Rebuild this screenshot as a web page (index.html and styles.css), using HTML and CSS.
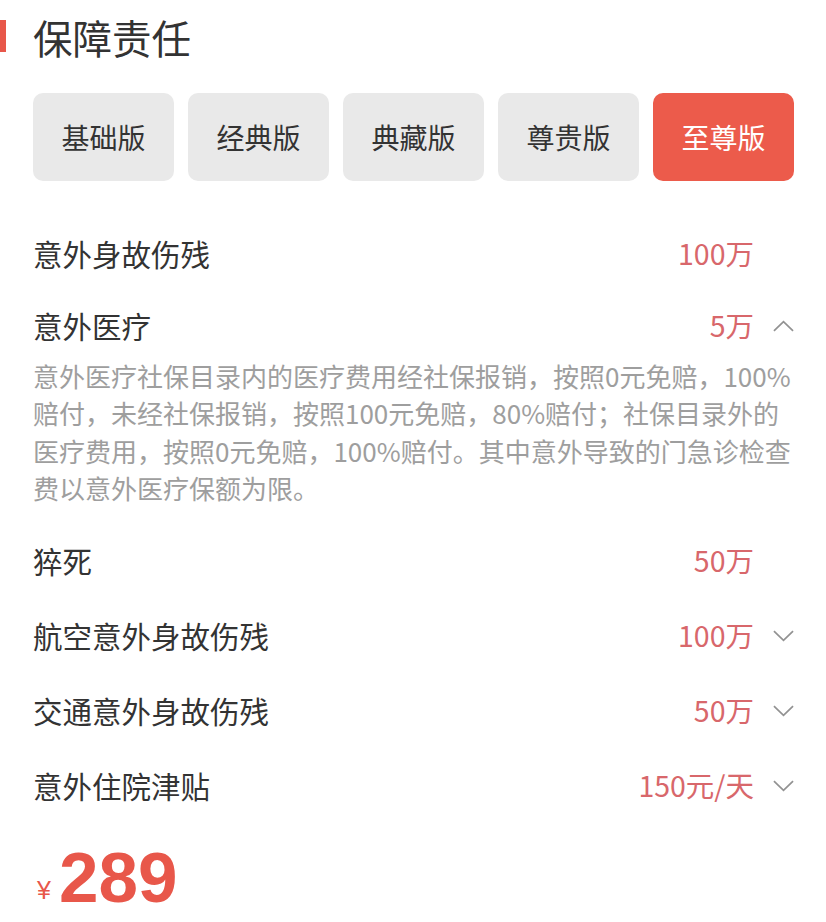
FILE: index.html
```html
<!DOCTYPE html>
<html lang="zh-CN">
<head>
    <meta charset="UTF-8">
    <meta name="viewport" content="width=device-width, initial-scale=1.0">
    <title>保障责任</title>
    <link rel="stylesheet" href="styles.css">
</head>
<body>
    <div class="section-title">保障责任</div>

    <div class="plans">
        <div class="plan">基础版</div>
        <div class="plan">经典版</div>
        <div class="plan">典藏版</div>
        <div class="plan">尊贵版</div>
        <div class="plan active">至尊版</div>
    </div>

    <div class="items">
        <div class="item">
            <div class="item-head">
                <span class="label">意外身故伤残</span>
                <span class="value">100万</span>
                <span class="arrow"></span>
            </div>
        </div>
        <div class="item open">
            <div class="item-head">
                <span class="label">意外医疗</span>
                <span class="value">5万</span>
                <span class="arrow"><svg viewBox="0 0 22 12"><polyline points="1,11 11,1.5 21,11"/></svg></span>
            </div>
            <div class="desc">意外医疗社保目录内的医疗费用经社保报销，按照0元免赔，100%赔付，未经社保报销，按照100元免赔，80%赔付；社保目录外的医疗费用，按照0元免赔，100%赔付。其中意外导致的门急诊检查费以意外医疗保额为限。</div>
        </div>
        <div class="item">
            <div class="item-head">
                <span class="label">猝死</span>
                <span class="value">50万</span>
                <span class="arrow"></span>
            </div>
        </div>
        <div class="item">
            <div class="item-head">
                <span class="label">航空意外身故伤残</span>
                <span class="value">100万</span>
                <span class="arrow"><svg viewBox="0 0 22 12"><polyline points="1,1 11,10.5 21,1"/></svg></span>
            </div>
        </div>
        <div class="item">
            <div class="item-head">
                <span class="label">交通意外身故伤残</span>
                <span class="value">50万</span>
                <span class="arrow"><svg viewBox="0 0 22 12"><polyline points="1,1 11,10.5 21,1"/></svg></span>
            </div>
        </div>
        <div class="item">
            <div class="item-head">
                <span class="label">意外住院津贴</span>
                <span class="value">150元/天</span>
                <span class="arrow"><svg viewBox="0 0 22 12"><polyline points="1,1 11,10.5 21,1"/></svg></span>
            </div>
        </div>
    </div>

    <div class="price"><span class="currency">¥</span><span class="amount">289</span></div>
</body>
</html>
```

FILE: styles.css
```css
body {
    margin: 0;
    padding: 0 32px 0 33px;
    background-color: #fff;
    font-family: "Noto Sans CJK SC", "Noto Sans", sans-serif;
    color: #333;
}
.section-title {
    position: relative;
    font-size: 39.5px;
    line-height: 74px;
    height: 74px;
}
.section-title::before {
    content: "";
    position: absolute;
    left: -33px;
    top: 20px;
    width: 6px;
    height: 32px;
    background-color: #e8574a;
}
.plans {
    display: grid;
    grid-template-columns: repeat(5, 1fr);
    gap: 14px;
    margin-top: 19px;
}
.plan {
    height: 88px;
    border-radius: 10px;
    background-color: #e9e9e9;
    display: flex;
    align-items: center;
    justify-content: center;
    font-size: 28px;
    color: #333;
}
.plan.active {
    background-color: #ec5b4b;
    color: #fff;
}
.items {
    margin-top: 34px;
}
.item-head {
    display: flex;
    align-items: center;
    height: 75px;
}
.item.open .item-head {
    height: 69px;
}
.label {
    flex: 1;
    font-size: 29.5px;
}
.value {
    font-size: 28.5px;
    color: #d8676b;
}
.arrow {
    width: 40px;
    display: flex;
    justify-content: flex-end;
    padding-top: 3px;
}
.arrow svg {
    width: 21px;
    height: 12px;
    fill: none;
    stroke: #929292;
    stroke-width: 1.8;
}
.desc {
    font-size: 26px;
    line-height: 37.3px;
    color: #9e9e9e;
    margin-top: -2px;
    margin-bottom: 16px;
}
.price {
    display: flex;
    align-items: baseline;
    margin-top: 21px;
    color: #e8574a;
}
.currency {
    font-family: "Liberation Sans", sans-serif;
    font-size: 25px;
    margin-left: 4px;
    margin-right: 8px;
    position: relative;
    top: -3px;
}
.amount {
    font-family: "Liberation Sans", sans-serif;
    font-size: 71px;
    font-weight: bold;
    line-height: 70px;
}
```
